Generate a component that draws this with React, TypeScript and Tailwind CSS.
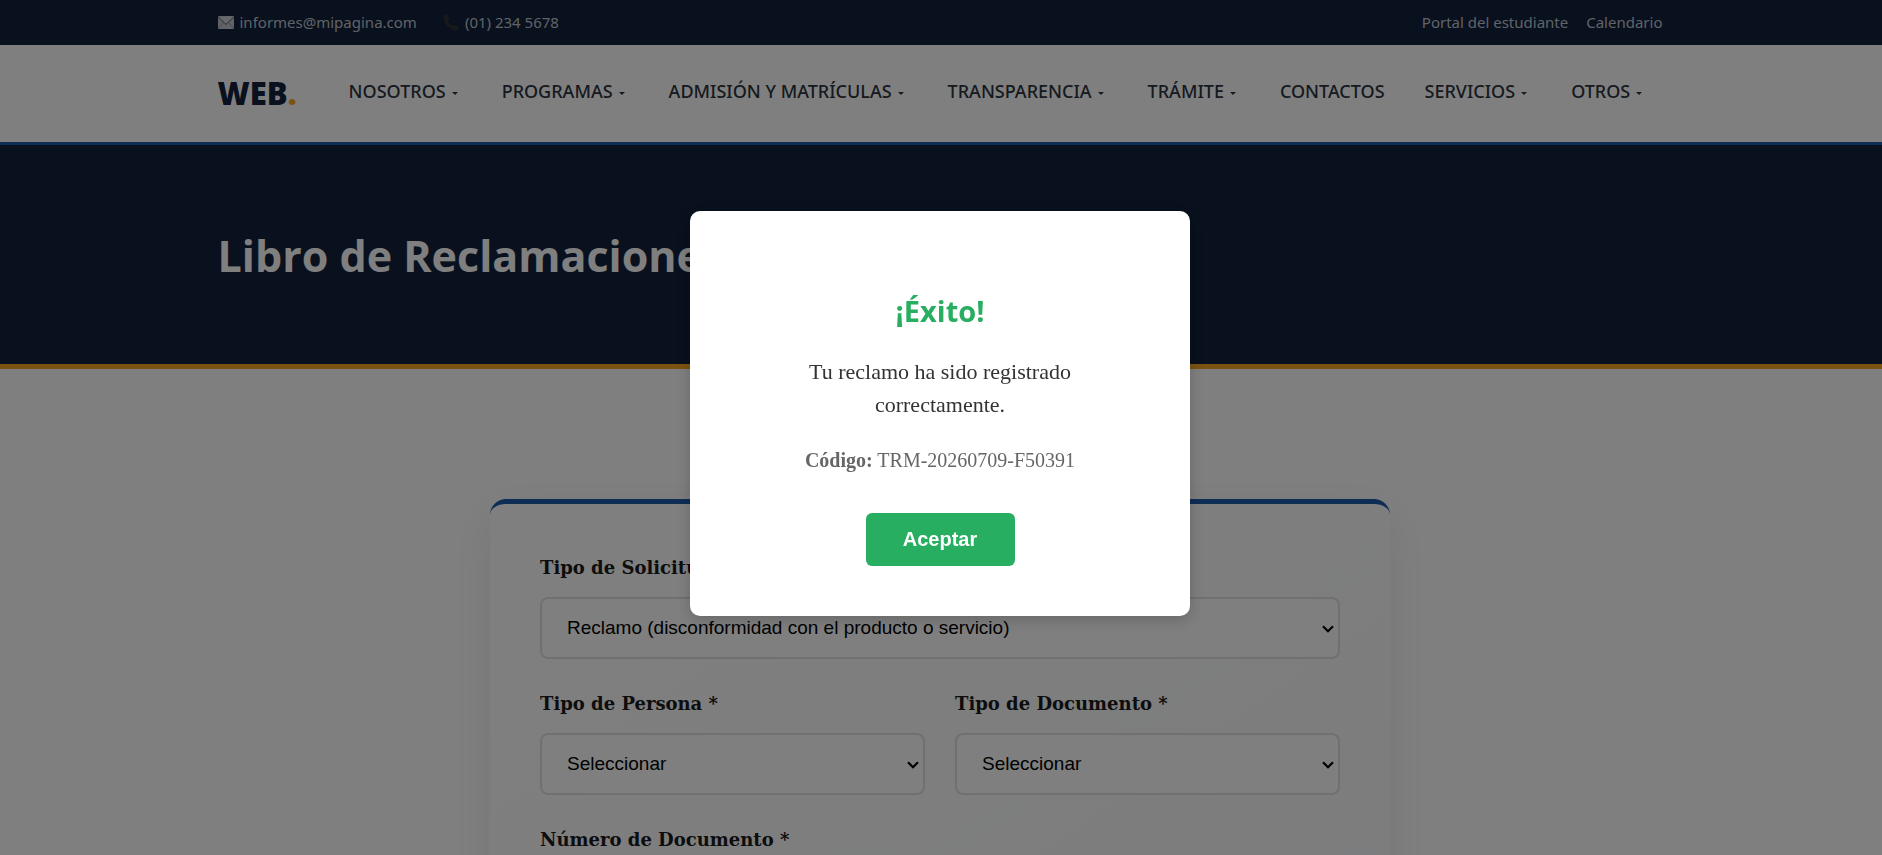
import { useState } from 'react';

const menuItems = [
  { label: 'NOSOTROS', hasMenu: true },
  { label: 'PROGRAMAS', hasMenu: true },
  { label: 'ADMISIÓN Y MATRÍCULAS', hasMenu: true },
  { label: 'TRANSPARENCIA', hasMenu: true },
  { label: 'TRÁMITE', hasMenu: true },
  { label: 'CONTACTOS', hasMenu: false },
  { label: 'SERVICIOS', hasMenu: true },
  { label: 'OTROS', hasMenu: true }
];

interface SelectFieldProps {
  id: string;
  label: string;
  options: string[];
}

function MailIcon() {
  return (
    <svg viewBox="0 0 16 13" className="w-4 h-[13px]" aria-hidden="true">
      <rect width="16" height="13" rx="1" fill="#c3c7cc" />
      <path d="M0 12.5 5.5 6.5M16 12.5 10.5 6.5" stroke="#8f949b" strokeWidth="1" />
      <path d="M0 1 8 8.5 16 1" fill="#cfd2d6" stroke="#7d828a" strokeWidth="1.2" />
    </svg>
  );
}

function PhoneIcon() {
  return (
    <svg viewBox="0 0 16 17" className="w-4 h-[17px]" aria-hidden="true">
      <path
        d="M1.2 1.6C2 .6 3.4 0 4.3.8L6 4.4C6.3 5.2 5.3 5.9 4.9 6.6 5.5 9 7.5 11 9.7 11.9 10.5 11.6 11.2 10.5 12 10.7L15.4 12.8C16.2 13.5 15.2 15.4 14 16.2 10.5 18 1.5 11.5.6 4.5.5 3.4.6 2.4 1.2 1.6Z"
        fill="#2f3335"
      />
    </svg>
  );
}

function SelectField({ id, label, options }: SelectFieldProps) {
  return (
    <div className="min-w-0">
      <label htmlFor={id} className="block mb-3.5 font-bold text-[18px] leading-[30px] font-['DejaVu_Serif',Georgia,serif]">
        {label}
      </label>
      <div className="relative">
        <select
          id={id}
          className="block w-full h-[62px] pl-[25px] pr-8 appearance-none rounded-lg border-2 border-[#e0e0e0] bg-white text-black text-[19px] font-['Liberation_Sans',Arial,sans-serif]"
        >
          {options.map((option) => (
            <option key={option}>{option}</option>
          ))}
        </select>
        <svg viewBox="0 0 12 8" className="absolute right-1.5 top-7 w-3 h-2 pointer-events-none" aria-hidden="true">
          <path d="M1 1.2 6 6.2 11 1.2" fill="none" stroke="#000000" strokeWidth="2.2" />
        </svg>
      </div>
    </div>
  );
}

export default function App() {
  const [open, setOpen] = useState(true);

  return (
    <div className="h-screen overflow-hidden bg-white text-[#1a1a1a] font-['Liberation_Serif',Georgia,serif]">
      <div className="pr-0.5 bg-[#12213c] font-['Noto_Sans',sans-serif]">
        <div className="max-w-[1445px] h-[45px] mx-auto flex items-center justify-between text-[15px] text-[#c0c6d0]">
          <div className="flex items-center gap-[26px]">
            <a href="#correo" className="flex items-center gap-1.5">
              <MailIcon />
              informes@mipagina.com
            </a>
            <a href="#telefono" className="flex items-center gap-1.5">
              <PhoneIcon />
              (01) 234 5678
            </a>
          </div>
          <div className="flex items-center gap-[18px]">
            <a href="#portal">Portal del estudiante</a>
            <a href="#calendario">Calendario</a>
          </div>
        </div>
      </div>

      <header className="pr-0.5 bg-white border-b-[3px] border-[#1b5bab] font-['Noto_Sans',sans-serif]">
        <div className="max-w-[1445px] h-[97px] mx-auto flex items-center">
          <a href="#inicio" className="text-[31px] font-black text-[#12213c] font-['Open_Sans',sans-serif]">
            WEB<span className="text-[#f5a623]">.</span>
          </a>
          <nav className="flex items-center gap-10 ml-[52px] pb-1">
            {menuItems.map((item) => (
              <a key={item.label} href="#menu" className="flex items-center gap-1.5 whitespace-nowrap text-[18px] font-medium text-[#2c3440]">
                {item.label}
                {item.hasMenu && (
                  <span className="mt-1 mr-1 border-x-[3px] border-t-[3px] border-x-transparent border-t-current"></span>
                )}
              </a>
            ))}
          </nav>
        </div>
      </header>

      <section className="pr-0.5 bg-[#12213c] border-b-[5px] border-[#f5a623] font-['Open_Sans',sans-serif]">
        <div className="max-w-[1445px] h-[219px] mx-auto pt-[76px]">
          <h1 className="text-[43px] leading-[70px] font-bold text-white">Libro de Reclamaciones</h1>
        </div>
      </section>

      <main className="pt-[130px] pr-0.5">
        <form className="max-w-[900px] h-[640px] mx-auto px-[50px] pt-[49px] rounded-2xl border-t-[5px] border-[#1b5bab] bg-linear-[145deg,#ffffff,#f8f9fc] shadow-[0_15px_50px_rgba(0,0,0,0.08)]">
          <div className="grid grid-cols-2 gap-[30px]">
            <div className="col-span-2">
              <SelectField
                id="solicitud"
                label="Tipo de Solicitud *"
                options={['Reclamo (disconformidad con el producto o servicio)', 'Queja']}
              />
            </div>
            <SelectField id="persona" label="Tipo de Persona *" options={['Seleccionar', 'Natural', 'Jurídica']} />
            <SelectField id="documento" label="Tipo de Documento *" options={['Seleccionar', 'DNI', 'RUC']} />
            <div>
              <label htmlFor="numero" className="block mb-3.5 font-bold text-[18px] leading-[30px] font-['DejaVu_Serif',Georgia,serif]">
                Número de Documento *
              </label>
              <input id="numero" type="text" className="block w-full h-[62px] px-[25px] rounded-lg border-2 border-[#e0e0e0] bg-white" />
            </div>
          </div>
        </form>
      </main>

      {open && (
        <div className="fixed inset-0 flex items-start justify-center pt-[211px] pr-0.5 bg-black/50">
          <div role="dialog" aria-modal="true" aria-labelledby="titulo" className="w-[500px] px-[100px] pt-20 pb-[50px] rounded-[10px] bg-white text-center shadow-[0_4px_15px_rgba(0,0,0,0.2)]">
            <h2 id="titulo" className="text-[29px] leading-10 font-bold text-[#27ae60] font-['Open_Sans',sans-serif]">¡Éxito!</h2>
            <p className="mt-6 text-[22px] leading-[33px] text-[#333333]">
              Tu reclamo ha sido registrado correctamente.
            </p>
            <p className="mt-6 text-[20px] leading-[30px] text-[#666666] whitespace-nowrap">
              <strong>Código:</strong> TRM-20260709-F50391
            </p>
            <button
              type="button"
              onClick={() => setOpen(false)}
              className="mt-[38px] w-[149px] h-[53px] pb-0.5 rounded-md bg-[#27ae60] text-white text-[20px] font-bold font-['Liberation_Sans',Arial,sans-serif]"
            >
              Aceptar
            </button>
          </div>
        </div>
      )}
    </div>
  );
}
